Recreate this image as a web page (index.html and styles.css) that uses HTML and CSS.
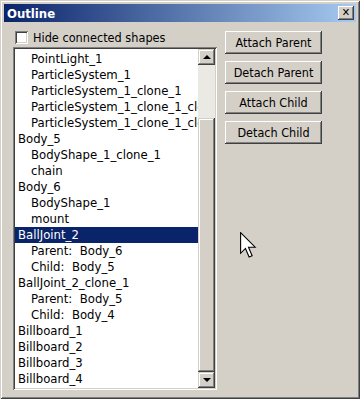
FILE: index.html
```html
<!DOCTYPE html>
<html lang="en">
<head>
    <meta charset="UTF-8">
    <meta name="viewport" content="width=device-width, initial-scale=1.0">
    <link rel="stylesheet" href="styles.css">
    <title>Outline</title>
</head>
<body>

<div class="window">
    <div class="titlebar">
        <span class="title">Outline</span>
        <span class="close-btn">&#x2715;</span>
    </div>

    <div class="main">
        <div class="left">
            <label class="check-row">
                <span class="checkbox"></span>
                <span>Hide connected shapes</span>
            </label>

            <div class="listbox">
                <div class="rows">
                    <div class="row child">PointLight_1</div>
                    <div class="row child">ParticleSystem_1</div>
                    <div class="row child">ParticleSystem_1_clone_1</div>
                    <div class="row child">ParticleSystem_1_clone_1_clone_1</div>
                    <div class="row child">ParticleSystem_1_clone_1_clone_2</div>
                    <div class="row">Body_5</div>
                    <div class="row child">BodyShape_1_clone_1</div>
                    <div class="row child">chain</div>
                    <div class="row">Body_6</div>
                    <div class="row child">BodyShape_1</div>
                    <div class="row child">mount</div>
                    <div class="row selected">BallJoint_2</div>
                    <div class="row child">Parent:&nbsp; Body_6</div>
                    <div class="row child">Child:&nbsp; Body_5</div>
                    <div class="row">BallJoint_2_clone_1</div>
                    <div class="row child">Parent:&nbsp; Body_5</div>
                    <div class="row child">Child:&nbsp; Body_4</div>
                    <div class="row">Billboard_1</div>
                    <div class="row">Billboard_2</div>
                    <div class="row">Billboard_3</div>
                    <div class="row">Billboard_4</div>
                </div>
                <div class="scrollbar">
                    <div class="sb-btn"><span class="arrow-up"></span></div>
                    <div class="sb-track">
                        <div class="sb-space"></div>
                        <div class="sb-thumb"></div>
                    </div>
                    <div class="sb-btn"><span class="arrow-down"></span></div>
                </div>
            </div>
        </div>

        <div class="buttons">
            <button class="btn">Attach Parent</button>
            <button class="btn">Detach Parent</button>
            <button class="btn">Attach Child</button>
            <button class="btn">Detach Child</button>
        </div>
    </div>

    <svg class="cursor" width="17" height="28" viewBox="0 0 14 23">
        <path d="M0.5,0.5 L0.5,17.5 L4.5,13.5 L7.5,20.5 L10,19.5 L7,12.5 L12.5,12.5 Z" fill="#fff" stroke="#000" stroke-width="0.9"/>
    </svg>
</div>

</body>
</html>
```

FILE: styles.css
```css
body {
    margin: 0;
    padding: 0;
    background-color: #d4d0c8;
    font-family: "DejaVu Sans Condensed", "DejaVu Sans", sans-serif;
    font-stretch: condensed;
    font-size: 12px;
    color: #000;
}

.window {
    position: relative;
    width: 360px;
    height: 399px;
    box-sizing: border-box;
    padding: 4px;
    background-color: #d4d0c8;
    box-shadow: inset 1px 1px #d4d0c8, inset -1px -1px #404040,
                inset 2px 2px #fff, inset -2px -2px #808080;
    display: flex;
    flex-direction: column;
}

.titlebar {
    height: 18px;
    display: flex;
    align-items: center;
    justify-content: space-between;
    padding: 0 2px 0 3px;
    background: linear-gradient(to right, #0a246a, #a6caf0);
}

.title {
    color: #fff;
    font-weight: bold;
    font-size: 13px;
}

.close-btn {
    width: 16px;
    height: 14px;
    box-sizing: border-box;
    background-color: #d4d0c8;
    box-shadow: inset -1px -1px #404040, inset 1px 1px #fff,
                inset -2px -2px #808080;
    font-size: 11px;
    font-weight: bold;
    line-height: 14px;
    text-align: center;
    font-family: "DejaVu Sans", sans-serif;
}

.main {
    display: flex;
    gap: 8px;
    padding: 9px 0 0 9px;
}

.left {
    display: flex;
    flex-direction: column;
}

.check-row {
    display: flex;
    align-items: center;
    gap: 5px;
    height: 13px;
    padding-left: 2px;
    margin-bottom: 3px;
    font-size: 12.6px;
}

.checkbox {
    width: 13px;
    height: 13px;
    box-sizing: border-box;
    background-color: #fff;
    box-shadow: inset 1px 1px #808080, inset -1px -1px #fff,
                inset 2px 2px #404040, inset -2px -2px #d4d0c8;
}

.listbox {
    width: 204px;
    height: 343px;
    box-sizing: border-box;
    padding: 2px;
    background-color: #fff;
    box-shadow: inset 1px 1px #808080, inset -1px -1px #fff,
                inset 2px 2px #404040, inset -2px -2px #d4d0c8;
    display: flex;
}

.rows {
    flex: 1;
    min-width: 0;
    padding-top: 2px;
    overflow: hidden;
    font-size: 13px;
}

.row {
    height: 16px;
    line-height: 16px;
    padding-left: 3px;
    white-space: nowrap;
    overflow: hidden;
}

.row.child {
    padding-left: 16px;
}

.row.selected {
    background-color: #0a246a;
    color: #fff;
}

.scrollbar {
    width: 17px;
    display: flex;
    flex-direction: column;
}

.sb-btn {
    height: 16px;
    background-color: #d4d0c8;
    box-shadow: inset -1px -1px #404040, inset 1px 1px #d4d0c8,
                inset -2px -2px #808080, inset 2px 2px #fff;
    display: flex;
    align-items: center;
    justify-content: center;
}

.arrow-up {
    width: 0;
    height: 0;
    border-left: 4px solid transparent;
    border-right: 4px solid transparent;
    border-bottom: 4px solid #000;
}

.arrow-down {
    width: 0;
    height: 0;
    border-left: 4px solid transparent;
    border-right: 4px solid transparent;
    border-top: 4px solid #000;
}

.sb-track {
    flex: 1;
    display: flex;
    flex-direction: column;
    background-color: #ebe9e4;
}

.sb-space {
    height: 53px;
}

.sb-thumb {
    flex: 1;
    background-color: #d4d0c8;
    box-shadow: inset -1px -1px #404040, inset 1px 1px #d4d0c8,
                inset -2px -2px #808080, inset 2px 2px #fff;
}

.buttons {
    display: flex;
    flex-direction: column;
    gap: 7px;
}

.btn {
    width: 97px;
    height: 23px;
    padding: 0;
    border: none;
    background-color: #d4d0c8;
    box-shadow: inset -1px -1px #404040, inset 1px 1px #fff,
                inset -2px -2px #808080, inset 2px 2px #d4d0c8;
    font-family: inherit;
    font-stretch: condensed;
    font-size: 12.5px;
    color: #000;
}

.cursor {
    position: absolute;
    left: 240px;
    top: 232px;
}
```
